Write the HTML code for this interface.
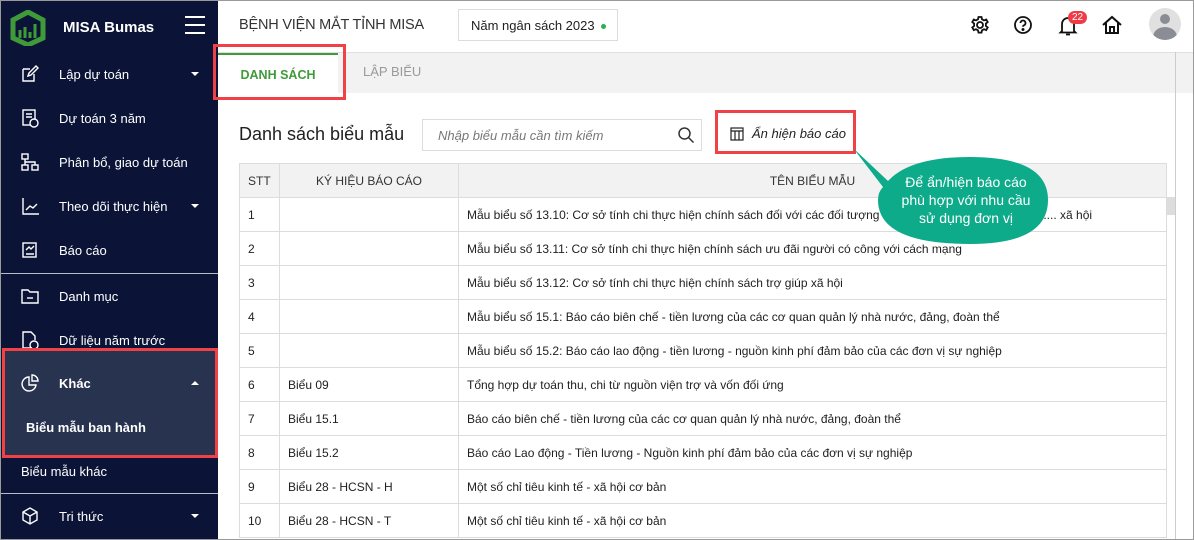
<!DOCTYPE html>
<html><head><meta charset="utf-8"><style>
*{box-sizing:border-box;margin:0;padding:0}
body{width:1194px;height:540px;overflow:hidden;font-family:"Liberation Sans","Noto Sans CJK SC",sans-serif;background:#fff;position:relative;color:#212121}
.frame{position:absolute;inset:0;border:1px solid #9a9a9a;pointer-events:none;z-index:50}
.side{position:absolute;left:0;top:0;width:218px;height:540px;background:#0b1437;color:#fff}
.item{position:absolute;left:0;width:218px;height:44px;font-size:13px;display:flex;align-items:center}
.item .ic{position:absolute;left:20px;top:12px;width:20px;height:20px}
.item .t{position:absolute;left:59px}
.item .ar{position:absolute;left:191px;top:20px;border-left:4px solid transparent;border-right:4px solid transparent;border-top:4px solid #fff}
.sep{position:absolute;left:0;width:218px;height:1px;background:#b8bcc8}
.top{position:absolute;left:218px;top:0;right:0;height:52px;background:#fff}
.tabs{position:absolute;left:218px;top:52px;right:0;height:41px;background:#f2f2f2;border-top:1px solid #e0e0e0}
.red{position:absolute;border:3px solid #f04147;z-index:20}
table{position:absolute;left:239px;top:163px;width:928px;border-collapse:collapse;font-size:12px}
td,th{border:1px solid #dcdcdc;height:34px;padding:0 8px;text-align:left;font-weight:normal;white-space:nowrap;overflow:hidden}
th{background:#f2f2f2;font-size:12px;color:#333}
</style></head><body>
<div class="frame"></div>
<div class="side">
 <svg style="position:absolute;left:10px;top:10px" width="36" height="36" viewBox="0 0 36 36"><path d="M18 2 L33 10 V28 L18 35 L3 28 V10 Z" fill="none" stroke="#3f9a3a" stroke-width="5"/><path d="M10 28V20M15 28V17M20 28V22M25 28V14" stroke="#3f9a3a" stroke-width="3"/></svg>
 <div style="position:absolute;left:63px;top:19px;font-size:15px;font-weight:bold">MISA Bumas</div>
 <div style="position:absolute;left:185px;top:16px;width:20px;height:2px;background:#fff;box-shadow:0 8px 0 #fff,0 16px 0 #fff"></div>
 <div class="item" style="top:52px"><svg class="ic" viewBox="0 0 20 20" fill="none" stroke="#fff" stroke-width="1.4"><path d="M3 5h7M3 5v12h11v-7M8 12l1-3 7-7 2 2-7 7z"/></svg><span class="t">Lập dự toán</span><span class="ar"></span></div>
 <div class="item" style="top:96px"><svg class="ic" viewBox="0 0 20 20" fill="none" stroke="#fff" stroke-width="1.4"><rect x="3" y="2" width="12" height="15"/><path d="M6 6h6M6 9h6"/><circle cx="14" cy="15" r="4" fill="#0b1437"/></svg><span class="t">Dự toán 3 năm</span></div>
 <div class="item" style="top:140px"><svg class="ic" viewBox="0 0 20 20" fill="none" stroke="#fff" stroke-width="1.4"><rect x="2" y="2" width="6" height="5"/><rect x="2" y="13" width="6" height="5"/><rect x="12" y="13" width="6" height="5"/><path d="M5 7v6M5 10h10v3"/></svg><span class="t">Phân bổ, giao dự toán</span></div>
 <div class="item" style="top:184px"><svg class="ic" viewBox="0 0 20 20" fill="none" stroke="#fff" stroke-width="1.4"><path d="M3 2v16h16M6 14l4-4 3 2 4-4"/></svg><span class="t">Theo dõi thực hiện</span><span class="ar"></span></div>
 <div class="item" style="top:228px"><svg class="ic" viewBox="0 0 20 20" fill="none" stroke="#fff" stroke-width="1.4"><rect x="3" y="3" width="13" height="14"/><path d="M6 10l3-3 2 2 3-3M6 14h8"/></svg><span class="t">Báo cáo</span></div>
 <div class="sep" style="top:273px"></div>
 <div class="item" style="top:274px"><svg class="ic" viewBox="0 0 20 20" fill="none" stroke="#fff" stroke-width="1.4"><path d="M2 4h6l2 2h8v11H2z"/><path d="M7 12h6"/></svg><span class="t">Danh mục</span></div>
 <div class="item" style="top:318px"><svg class="ic" viewBox="0 0 20 20" fill="none" stroke="#fff" stroke-width="1.4"><path d="M12 18H3V2h8l4 4v4"/><circle cx="14" cy="15" r="4"/></svg><span class="t">Dữ liệu năm trước</span></div>
 <div style="position:absolute;left:3px;top:350px;width:214px;height:106px;background:#27334f"></div>
 <div class="item" style="top:361px;font-weight:bold"><svg class="ic" viewBox="0 0 20 20" fill="none" stroke="#fff" stroke-width="1.4"><path d="M9 4a7 7 0 1 0 7 8H9z"/><path d="M12 2a6 6 0 0 1 6 6h-6z"/></svg><span class="t">Khác</span><span class="ar" style="border-top:0;border-bottom:4px solid #fff"></span></div>
 <div style="position:absolute;left:26px;top:420px;font-size:13px;font-weight:bold">Biểu mẫu ban hành</div>
 <div style="position:absolute;left:21px;top:464px;font-size:13px">Biểu mẫu khác</div>
 <div class="sep" style="top:493px"></div>
 <div class="item" style="top:494px"><svg class="ic" viewBox="0 0 20 20" fill="none" stroke="#fff" stroke-width="1.4"><path d="M10 2l7 4v8l-7 4-7-4V6zM3 6l7 4 7-4M10 10v8"/></svg><span class="t">Tri thức</span><span class="ar"></span></div>
</div>
<div class="red" style="left:2px;top:348px;width:216px;height:110px"></div>
<div class="top">
 <div style="position:absolute;left:21px;top:17px;font-size:14.5px;color:#333;letter-spacing:-0.2px">BỆNH VIỆN MẮT TỈNH MISA</div>
 <div style="position:absolute;left:240px;top:9px;width:160px;height:32px;border:1px solid #ddd;font-size:13px;padding:8px 12px;white-space:nowrap">Năm ngân sách 2023<span style="display:inline-block;width:5px;height:5px;border-radius:50%;background:#2bb24c;vertical-align:middle;margin-left:6px"></span></div>
 <svg style="position:absolute;left:752px;top:15px" width="20" height="20" viewBox="0 0 20 20" fill="none" stroke="#111" stroke-width="1.8"><circle cx="10" cy="10" r="3"/><path d="M8.5 2h3l.5 2.3 2 1.1 2.2-.9 1.5 2.6-1.8 1.5v2.4l1.8 1.5-1.5 2.6-2.2-.9-2 1.1-.5 2.3h-3l-.5-2.3-2-1.1-2.2.9-1.5-2.6 1.8-1.5V8.6L2.3 7.1l1.5-2.6 2.2.9 2-1.1z"/></svg>
 <svg style="position:absolute;left:795px;top:15px" width="20" height="20" viewBox="0 0 20 20" fill="none" stroke="#111" stroke-width="1.8"><circle cx="10" cy="10" r="8"/><path d="M7.5 8a2.5 2.5 0 1 1 3.5 2.3c-.7.3-1 .8-1 1.5"/><circle cx="10" cy="14.5" r=".6" fill="#111"/></svg>
 <svg style="position:absolute;left:840px;top:15px" width="20" height="22" viewBox="0 0 20 22" fill="none" stroke="#111" stroke-width="1.8"><path d="M4 16V9a6 6 0 0 1 12 0v7l1.5 1.5h-15zM8 19.5h4"/></svg>
 <div style="position:absolute;left:850px;top:11px;background:#f03b47;color:#fff;font-size:10px;border-radius:7px;padding:0 4px;line-height:13px">22</div>
 <svg style="position:absolute;left:883px;top:14px" width="22" height="22" viewBox="0 0 22 22" fill="none" stroke="#111" stroke-width="2"><path d="M2 11L11 3l9 8M5 9v10h12V9M9 19v-6h4v6"/></svg>
 <div style="position:absolute;left:931px;top:8px;width:32px;height:32px;border-radius:50%;background:#e0e0e0;overflow:hidden"><div style="position:absolute;left:11px;top:6px;width:10px;height:10px;border-radius:50%;background:#8a8d95"></div><div style="position:absolute;left:4px;top:19px;width:24px;height:20px;border-radius:50%;background:#8a8d95"></div></div>
</div>
<div class="tabs">
 <div style="position:absolute;left:0;top:0;width:120px;height:41px;background:#fff;border-top:2px solid #3f9a3a;color:#3f9a3a;font-weight:bold;font-size:12.5px;text-align:center;line-height:40px">DANH SÁCH</div>
 <div style="position:absolute;left:145px;top:0;font-size:13px;color:#9a9a9a;line-height:38px">LẬP BIỂU</div>
</div>
<div class="red" style="left:213px;top:44px;width:133px;height:56px"></div>
<div style="position:absolute;left:239px;top:124px;font-size:18px;color:#212121">Danh sách biểu mẫu</div>
<div style="position:absolute;left:422px;top:119px;width:280px;height:32px;border:1px solid #ddd;font-size:13px;font-style:italic;color:#777;padding:8px 15px">Nhập biểu mẫu cần tìm kiếm</div>
<svg style="position:absolute;left:677px;top:126px" width="18" height="18" viewBox="0 0 18 18" fill="none" stroke="#333" stroke-width="1.5"><circle cx="7.5" cy="7.5" r="5.5"/><path d="M11.5 11.5l5 5"/></svg>
<div class="red" style="left:715px;top:110px;width:141px;height:44px"></div>
<svg style="position:absolute;left:730px;top:127px" width="14" height="14" viewBox="0 0 14 14" fill="none" stroke="#222" stroke-width="1.2"><rect x="1" y="1" width="12" height="12"/><path d="M1 4h12M5 4v9M9 4v9"/></svg>
<div style="position:absolute;left:752px;top:126px;font-size:13px;font-style:italic;color:#222">Ẩn hiện báo cáo</div>
<table>
<tr><th style="width:40px">STT</th><th style="width:179px;text-align:center">KÝ HIỆU BÁO CÁO</th><th style="text-align:center">TÊN BIỂU MẪU</th></tr>
<tr><td>1</td><td></td><td>Mẫu biểu số 13.10: Cơ sở tính chi thực hiện chính sách đối với các đối tượng bảo trợ xã hội ............................. xã hội</td></tr>
<tr><td>2</td><td></td><td>Mẫu biểu số 13.11: Cơ sở tính chi thực hiện chính sách ưu đãi người có công với cách mạng</td></tr>
<tr><td>3</td><td></td><td>Mẫu biểu số 13.12: Cơ sở tính chi thực hiện chính sách trợ giúp xã hội</td></tr>
<tr><td>4</td><td></td><td>Mẫu biểu số 15.1: Báo cáo biên chế - tiền lương của các cơ quan quản lý nhà nước, đảng, đoàn thể</td></tr>
<tr><td>5</td><td></td><td>Mẫu biểu số 15.2: Báo cáo lao động - tiền lương - nguồn kinh phí đảm bảo của các đơn vị sự nghiệp</td></tr>
<tr><td>6</td><td>Biểu 09</td><td>Tổng hợp dự toán thu, chi từ nguồn viện trợ và vốn đối ứng</td></tr>
<tr><td>7</td><td>Biểu 15.1</td><td>Báo cáo biên chế - tiền lương của các cơ quan quản lý nhà nước, đảng, đoàn thể</td></tr>
<tr><td>8</td><td>Biểu 15.2</td><td>Báo cáo Lao động - Tiền lương - Nguồn kinh phí đảm bảo của các đơn vị sự nghiệp</td></tr>
<tr><td>9</td><td>Biểu 28 - HCSN - H</td><td>Một số chỉ tiêu kinh tế - xã hội cơ bản</td></tr>
<tr><td>10</td><td>Biểu 28 - HCSN - T</td><td>Một số chỉ tiêu kinh tế - xã hội cơ bản</td></tr>
</table>
<div style="position:absolute;left:1167px;top:197px;width:8px;height:18px;background:#ddd"></div>
<div style="position:absolute;left:1175px;top:52px;width:1px;height:488px;background:#ccc"></div>
<svg style="position:absolute;left:850px;top:145px;z-index:30" width="200" height="102" viewBox="0 0 200 102"><path d="M3 3 L38 36 Q60 12 120 12 Q198 12 198 55 Q198 99 120 99 Q28 99 28 55 Q28 47 33 42 Z" fill="#0dab8a"/><text x="116" y="42" fill="#fff" font-size="14" text-anchor="middle" font-family="Liberation Sans,sans-serif">Để ẩn/hiện báo cáo</text><text x="116" y="60" fill="#fff" font-size="14" text-anchor="middle" font-family="Liberation Sans,sans-serif">phù hợp với nhu cầu</text><text x="116" y="78" fill="#fff" font-size="14" text-anchor="middle" font-family="Liberation Sans,sans-serif">sử dụng đơn vị</text></svg>
</body></html>
